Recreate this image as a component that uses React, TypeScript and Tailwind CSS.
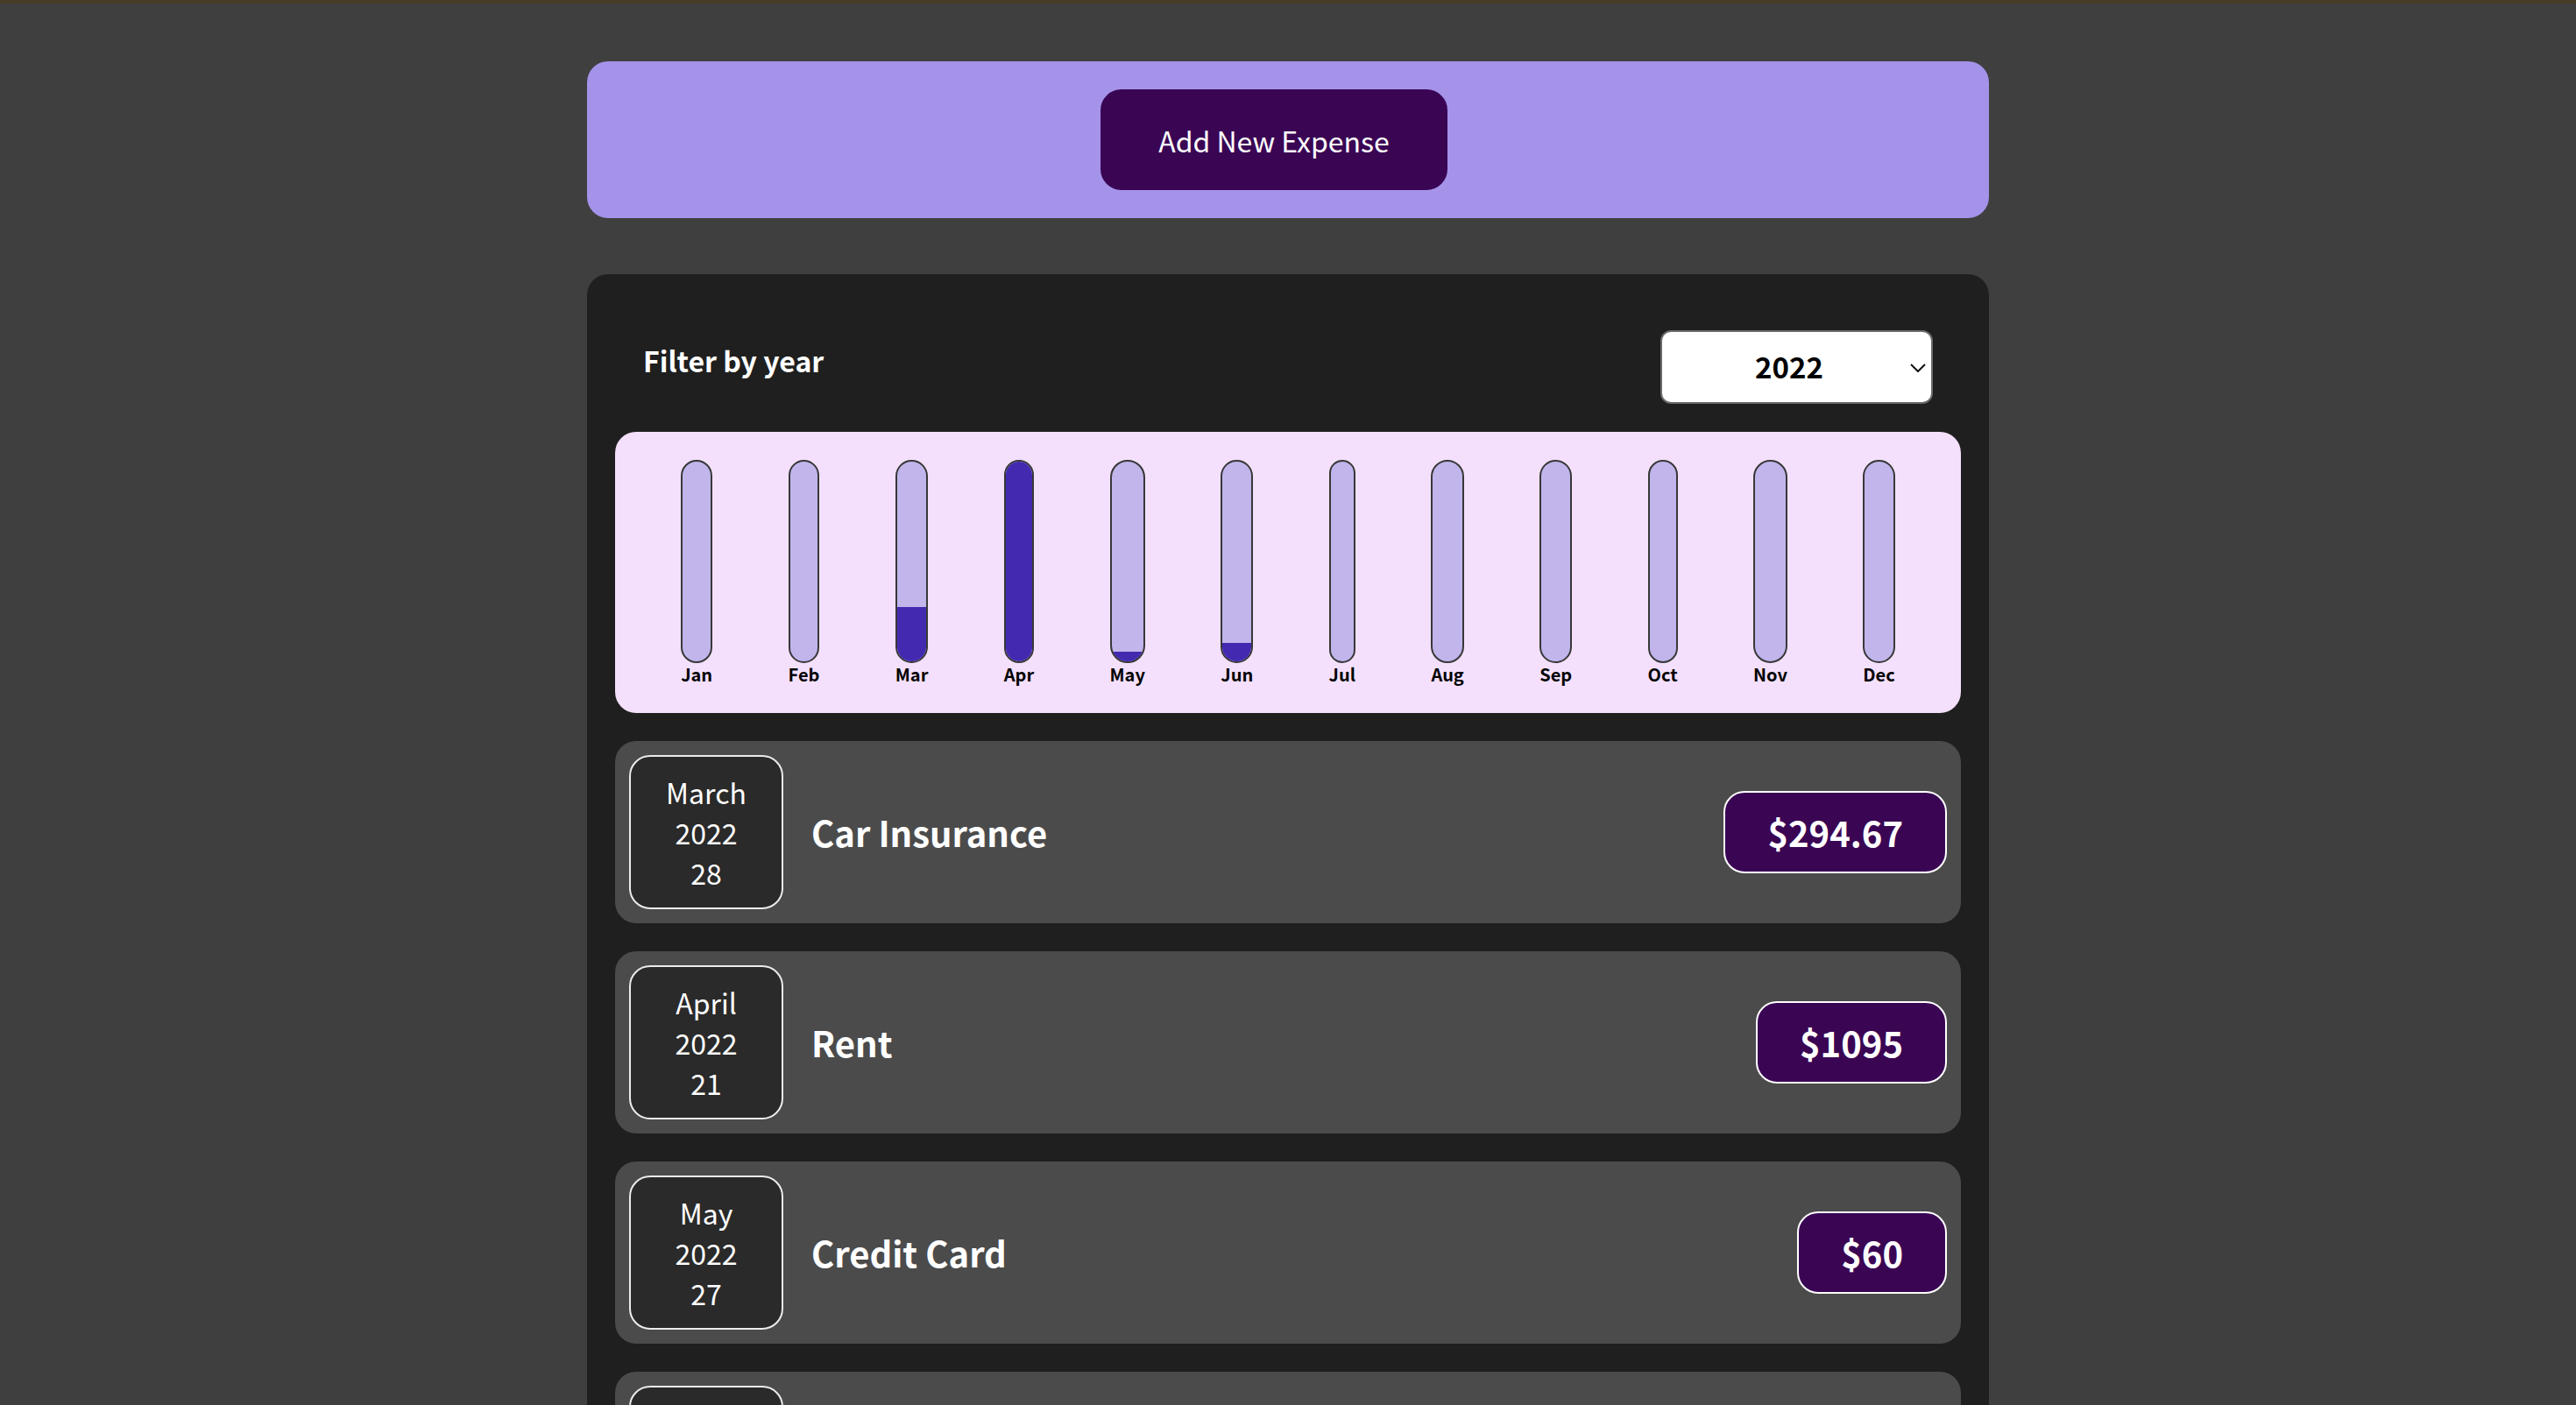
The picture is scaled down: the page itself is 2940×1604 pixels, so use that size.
import React from "react";

type Expense = {
  id: string;
  title: string;
  amount: number;
  month: string;
  year: number;
  day: number;
};

const expenses: Expense[] = [
  { id: "e1", title: "Car Insurance", amount: 294.67, month: "March", year: 2022, day: 28 },
  { id: "e2", title: "Rent", amount: 1095, month: "April", year: 2022, day: 21 },
  { id: "e3", title: "Credit Card", amount: 60, month: "May", year: 2022, day: 27 },
  { id: "e4", title: "Electricity Bill", amount: 100, month: "June", year: 2022, day: 12 },
];

const months = ["Jan", "Feb", "Mar", "Apr", "May", "Jun", "Jul", "Aug", "Sep", "Oct", "Nov", "Dec"];
const chartValues = [0, 0, 294.67, 1095, 60, 100, 0, 0, 0, 0, 0, 0];
const maxValue = Math.max(...chartValues);

function ChartBar({ label, value }: { label: string; value: number }) {
  const fill = maxValue > 0 ? Math.round((value / maxValue) * 100) + "%" : "0%";
  return (
    <div className="flex h-full flex-col items-center">
      <div className="flex h-full w-full flex-col justify-end overflow-hidden rounded-full border-2 border-[#383838] bg-[#c1b5ec]">
        <div className="w-full bg-[#4329b0]" style={{ height: fill }} />
      </div>
      <div className="text-[20px] font-bold leading-[26px] text-black">{label}</div>
    </div>
  );
}

function ExpenseItem({ item }: { item: Expense }) {
  const price = "$" + item.amount;
  return (
    <div className="flex h-[208px] items-center rounded-[24px] bg-[#4b4b4b] p-[16px]">
      {/* DATA */}
      <div className="flex h-[176px] w-[176px] shrink-0 flex-col items-center justify-center rounded-[24px] border-2 border-[#ececec] bg-[#2a2a2a] text-[32px] leading-[46px] text-white">
        <div>{item.month}</div>
        <div>{item.year}</div>
        <div>{item.day}</div>
      </div>

      <h2 className="mx-[32px] flex-1 text-[40px] font-bold text-white">{item.title}</h2>

      <div className="rounded-[24px] border-2 border-white bg-[#3a0654] px-[48px] py-[16px] text-[40px] font-bold leading-[58px] text-white">
        {price}
      </div>
    </div>
  );
}

export default function App() {
  return (
    <div
      className="min-h-screen bg-[#3f3f3f] pb-[64px]"
      style={{ fontFamily: '"Noto Sans CJK JP", "Noto Sans", sans-serif' }}
    >
      <div className="h-[4px] bg-[#473c27]" />

      {/* NOVA DESPESA */}
      <div className="mx-auto mt-[66px] w-[1600px] rounded-[24px] bg-[#a593ea] p-[32px] text-center">
        <button className="mr-[32px] h-[115px] rounded-[24px] border-2 border-[#3a0654] bg-[#3a0654] px-[64px] text-[32px] text-white">
          Add New Expense
        </button>
      </div>

      {/* LISTA */}
      <div className="mx-auto mt-[64px] w-[1600px] rounded-[24px] bg-[#1f1f1f] p-[32px]">
        <div className="my-[32px] flex items-center justify-between px-[32px]">
          <label className="mb-[16px] text-[32px] font-bold text-white">Filter by year</label>
          <div className="relative">
            <select
              defaultValue="2022"
              className="h-[84px] w-[311px] appearance-none rounded-[12px] border-2 border-[#6b6b6b] bg-white pl-[106px] text-[33px] font-bold text-black outline-none"
            >
              <option>2022</option>
              <option>2021</option>
              <option>2020</option>
              <option>2019</option>
            </select>
            <svg
              className="pointer-events-none absolute right-[8px] top-[38px]"
              width="18"
              height="10"
              viewBox="0 0 18 10"
              fill="none"
            >
              <polyline points="1,1 9,9 17,1" stroke="#111" strokeWidth="2" />
            </svg>
          </div>
        </div>

        {/* GRAFICO */}
        <div className="flex h-[321px] justify-around rounded-[24px] bg-[#f4e0fc] p-[32px] pb-[31px]">
          {months.map((m, i) => (
            <ChartBar key={m} label={m} value={chartValues[i]} />
          ))}
        </div>

        <div className="mt-[32px] flex flex-col gap-[32px]">
          {expenses.map((e) => (
            <ExpenseItem key={e.id} item={e} />
          ))}
        </div>
      </div>
    </div>
  );
}
